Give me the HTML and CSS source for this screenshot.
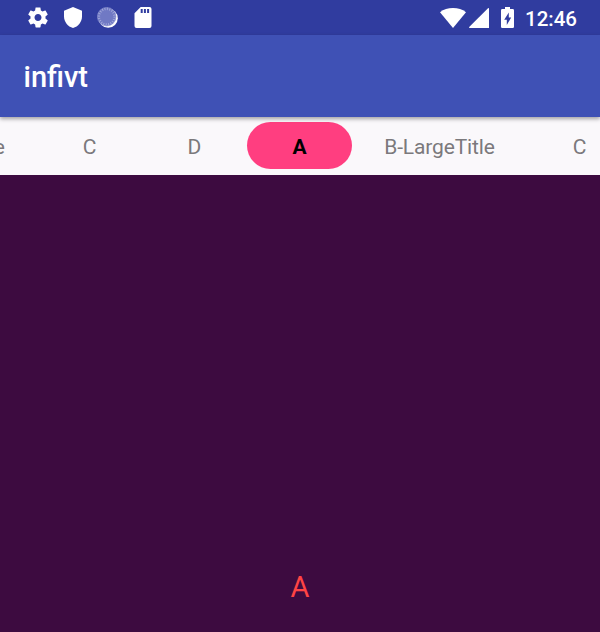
FILE: index.html
```html
<!DOCTYPE html>
<html lang="en">
<head>
<meta charset="utf-8">
<title>infivt</title>
<link rel="stylesheet" href="styles.css">
</head>
<body>
<header class="status-bar">
  <div class="notifications">
    <svg class="gear" viewBox="2 2 20 20"><path fill-rule="evenodd" d="M19.43 12.98c.04-.32.07-.64.07-.98s-.03-.66-.07-.98l2.11-1.65c.19-.15.24-.42.12-.64l-2-3.46c-.12-.22-.39-.3-.61-.22l-2.49 1c-.52-.4-1.08-.73-1.69-.98l-.38-2.65C14.46 2.18 14.25 2 14 2h-4c-.25 0-.46.18-.49.42l-.38 2.65c-.61.25-1.17.59-1.69.98l-2.49-1c-.23-.09-.49 0-.61.22l-2 3.46c-.13.22-.07.49.12.64l2.11 1.65c-.04.32-.07.65-.07.98s.03.66.07.98l-2.11 1.65c-.19.15-.24.42-.12.64l2 3.46c.12.22.39.3.61.22l2.49-1c.52.4 1.08.73 1.69.98l.38 2.65c.03.24.24.42.49.42h4c.25 0 .46-.18.49-.42l.38-2.65c.61-.25 1.17-.59 1.69-.98l2.49 1c.23.09.49 0 .61-.22l2-3.46c.12-.22.07-.49-.12-.64l-2.11-1.65zM12 15.5c-1.93 0-3.5-1.57-3.5-3.5s1.57-3.5 3.5-3.5 3.5 1.57 3.5 3.5-1.57 3.5-3.5 3.5z"/></svg>
    <svg class="shield" viewBox="0 0 18 21"><path d="M9 0L0 3.8v5.700C0 14.800 3.800 19.700 9 21c5.200-1.300 9-6.200 9-11.500V3.800z"/></svg>
    <svg class="spinner" viewBox="0 0 21 21"><circle cx="11.200" cy="11.200" r="9.600"/><circle class="disc" cx="9.700" cy="9.700" r="9.300"/><circle class="rays" cx="9.700" cy="9.700" r="7.800"/><circle class="rim" cx="9.700" cy="9.700" r="9.300"/></svg>
    <svg class="card" viewBox="0 0 17 21"><path fill-rule="evenodd" d="M6.200 0H15a2 2 0 0 1 2 2v17a2 2 0 0 1-2 2H2a2 2 0 0 1-2-2V6.200zM6.200 2v4h2V2zM9.400 2v4h2V2zM12.600 2v4h2V2z"/></svg>
  </div>
  <div class="system">
    <svg class="wifi" viewBox="0 0 26 20"><path d="M13 20L0 4.200C3.600 1.400 8 0 13 0s9.400 1.400 13 4.200z"/></svg>
    <svg class="signal" viewBox="0 0 20 20"><path d="M.6 20a.6.6 0 0 1-.4-1L19 .2a.6.6 0 0 1 1 .4V20z"/></svg>
    <svg class="battery" viewBox="0 0 13 21"><path fill-rule="evenodd" d="M4 0h5v2.100h2.700A1.300 1.300 0 0 1 13 3.400v16.300a1.300 1.300 0 0 1-1.300 1.300H1.300A1.300 1.300 0 0 1 0 19.700V3.400a1.300 1.300 0 0 1 1.300-1.300H4zM7.800 5.500L3.200 12.800h2.600v5.200l4.400-7.500H7.800z"/></svg>
    <time class="clock">12:46</time>
  </div>
</header>
<div class="app-bar"><h1 class="title">infivt</h1></div>
<nav class="tabs">
  <div class="tab wide">B-LargeTitle</div>
  <div class="tab">C</div>
  <div class="tab">D</div>
  <div class="tab selected">A</div>
  <div class="tab wide">B-LargeTitle</div>
  <div class="tab">C</div>
</nav>
<main class="page">A</main>
</body>
</html>
```
FILE: styles.css
```css
* {
  box-sizing: border-box;
}

body {
  margin: 0;
  height: 632px;
  display: flex;
  flex-direction: column;
  overflow: hidden;
  font-family: Roboto, "Liberation Sans", sans-serif;
  background: #3d0b40;
}

.status-bar {
  flex: none;
  height: 35px;
  display: flex;
  justify-content: space-between;
  padding: 0 23px 0 28px;
  background: #303c9f;
  color: #fff;
}

.notifications,
.system {
  display: flex;
  align-items: center;
}

svg {
  display: block;
  fill: #fff;
}

.gear {
  width: 20px;
  height: 21px;
}

.shield {
  width: 18px;
  height: 21px;
  margin-left: 16px;
}

.spinner {
  width: 21px;
  height: 21px;
  margin-left: 15px;
}

.spinner .disc {
  fill: #7079c4;
}

.spinner .rays {
  fill: none;
  stroke: #a4aadb;
  stroke-width: 2.4;
  stroke-dasharray: 0.9 1.55;
}

.spinner .rim {
  fill: none;
  stroke: #8f96d0;
  stroke-width: 0.6;
}

.card {
  width: 18px;
  height: 21px;
  margin-left: 16px;
}

.wifi {
  width: 26px;
  height: 20px;
}

.signal {
  width: 20px;
  height: 20px;
  margin: 1px 0 0 3px;
}

.battery {
  width: 13px;
  height: 21px;
  margin-left: 12px;
}

.clock {
  margin: 2px 0 0 11px;
  font-size: 20.5px;
  font-weight: 500;
  line-height: 24px;
}

.app-bar {
  flex: none;
  position: relative;
  z-index: 1;
  height: 81.5px;
  display: flex;
  align-items: center;
  padding: 3px 23.5px 0;
  background: #3f51b5;
  color: #fff;
  box-shadow: 0 2px 4px rgba(0, 0, 0, 0.35);
}

.title {
  margin: 0;
  font-size: 29px;
  font-weight: 500;
  line-height: 34px;
}

.tabs {
  flex: none;
  width: 100%;
  height: 58.5px;
  display: flex;
  justify-content: flex-end;
  padding-top: 5.5px;
  padding-right: 0;
  overflow: hidden;
  background: #faf8fb;
  color: #7b797c;
  font-size: 21px;
}

.tab {
  flex: none;
  width: 105px;
  height: 47px;
  line-height: 50px;
  text-align: center;
}

.tab:last-child {
  margin-right: -32px;
}

.tab.wide {
  width: 175px;
  letter-spacing: -0.15px;
}

.tab.selected {
  border-radius: 24px;
  background: #ff3e80;
  color: #000;
  font-weight: 700;
}

.page {
  flex: 1;
  display: flex;
  align-items: flex-end;
  justify-content: center;
  padding-bottom: 28px;
  color: #ff4444;
  font-size: 29px;
  line-height: 34px;
}
```
